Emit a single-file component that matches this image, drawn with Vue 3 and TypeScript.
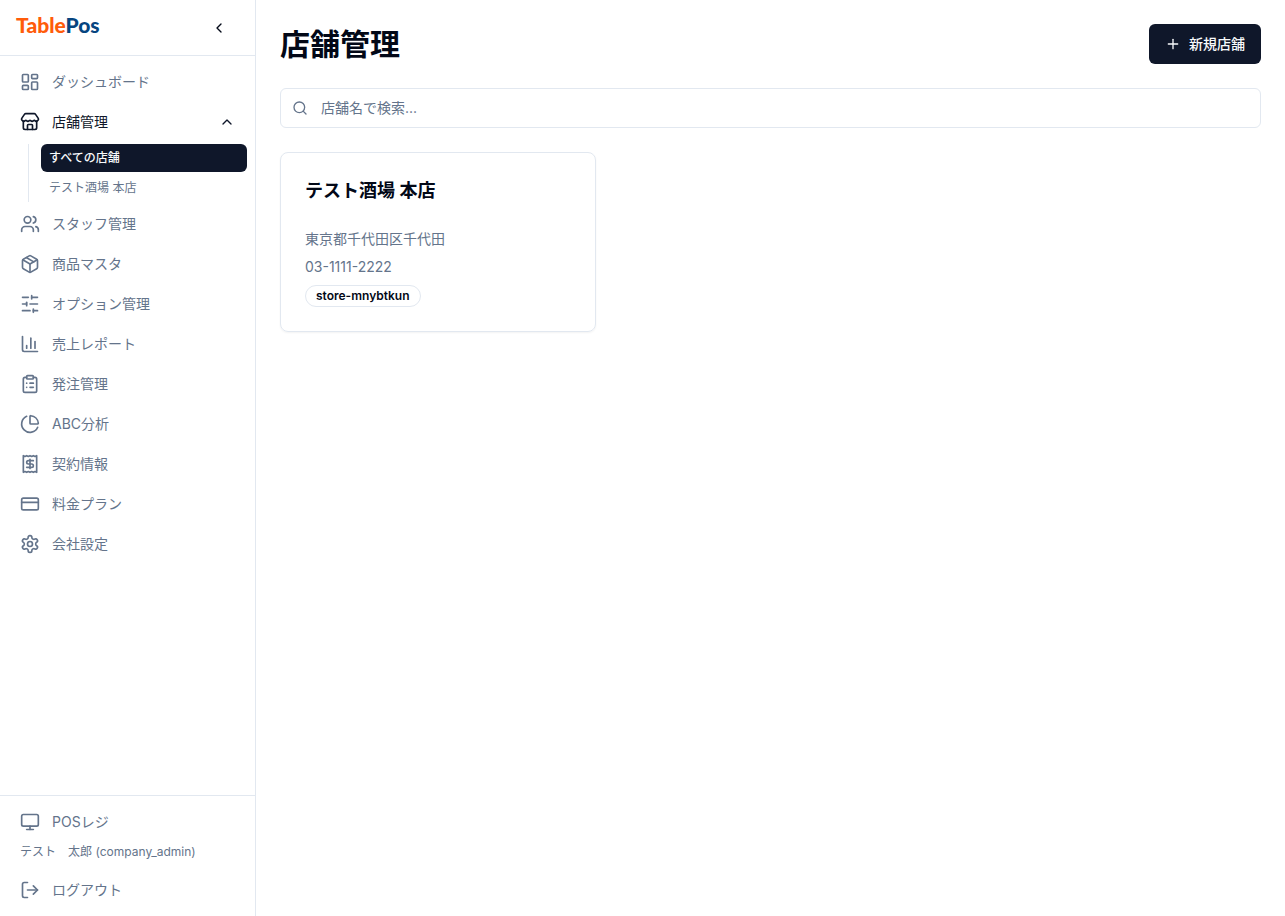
<script setup lang="ts">
import { ref } from 'vue'

interface NavItem {
  label: string
  icon: string[]
}

const icons: Record<string, string[]> = {
  dashboard: ['M4 3h5a1 1 0 0 1 1 1v7a1 1 0 0 1-1 1H4a1 1 0 0 1-1-1V4a1 1 0 0 1 1-1Z', 'M15 3h5a1 1 0 0 1 1 1v3a1 1 0 0 1-1 1h-5a1 1 0 0 1-1-1V4a1 1 0 0 1 1-1Z', 'M15 12h5a1 1 0 0 1 1 1v7a1 1 0 0 1-1 1h-5a1 1 0 0 1-1-1v-7a1 1 0 0 1 1-1Z', 'M4 16h5a1 1 0 0 1 1 1v3a1 1 0 0 1-1 1H4a1 1 0 0 1-1-1v-3a1 1 0 0 1 1-1Z'],
  store: ['M15 21v-5a1 1 0 0 0-1-1h-4a1 1 0 0 0-1 1v5', 'M17.774 10.31a1.12 1.12 0 0 0-1.549 0 2.5 2.5 0 0 1-3.451 0 1.12 1.12 0 0 0-1.548 0 2.5 2.5 0 0 1-3.452 0 1.12 1.12 0 0 0-1.549 0 2.5 2.5 0 0 1-3.77-3.248l2.889-4.184A2 2 0 0 1 7 2h10a2 2 0 0 1 1.653.873l2.895 4.192a2.5 2.5 0 0 1-3.774 3.244', 'M4 10.95V19a2 2 0 0 0 2 2h12a2 2 0 0 0 2-2v-8.05'],
  users: ['M16 21v-2a4 4 0 0 0-4-4H6a4 4 0 0 0-4 4v2', 'M13 7a4 4 0 1 1-8 0a4 4 0 0 1 8 0Z', 'M22 21v-2a4 4 0 0 0-3-3.87', 'M16 3.13a4 4 0 0 1 0 7.75'],
  box: ['m7.5 4.27 9 5.15', 'M21 8a2 2 0 0 0-1-1.73l-7-4a2 2 0 0 0-2 0l-7 4A2 2 0 0 0 3 8v8a2 2 0 0 0 1 1.73l7 4a2 2 0 0 0 2 0l7-4A2 2 0 0 0 21 16Z', 'm3.3 7 8.7 5 8.7-5', 'M12 22V12'],
  sliders: ['M21 4h-7', 'M10 4H3', 'M21 12h-9', 'M8 12H3', 'M21 20h-5', 'M12 20H3', 'M14 2v4', 'M8 10v4', 'M16 18v4'],
  chart: ['M3 3v16a2 2 0 0 0 2 2h16', 'M18 17V9', 'M13 17V5', 'M8 17v-3'],
  clipboard: ['M9 2h6a1 1 0 0 1 1 1v2a1 1 0 0 1-1 1H9a1 1 0 0 1-1-1V3a1 1 0 0 1 1-1Z', 'M16 4h2a2 2 0 0 1 2 2v14a2 2 0 0 1-2 2H6a2 2 0 0 1-2-2V6a2 2 0 0 1 2-2h2', 'M12 11h4', 'M12 16h4', 'M8 11h.01', 'M8 16h.01'],
  pie: ['M21 12c.552 0 1.005-.449.95-.998a10 10 0 0 0-8.953-8.951c-.55-.055-.998.398-.998.95v8a1 1 0 0 0 1 1z', 'M21.21 15.89A10 10 0 1 1 8 2.83'],
  receipt: ['M4 2v20l2-1 2 1 2-1 2 1 2-1 2 1 2-1 2 1V2l-2 1-2-1-2 1-2-1-2 1-2-1-2 1Z', 'M16 8h-6a2 2 0 1 0 0 4h4a2 2 0 1 1 0 4H8', 'M12 17.5v-11'],
  card: ['M4 5h16a2 2 0 0 1 2 2v10a2 2 0 0 1-2 2H4a2 2 0 0 1-2-2V7a2 2 0 0 1 2-2Z', 'M2 10h20'],
  settings: ['M12.22 2h-.44a2 2 0 0 0-2 2v.18a2 2 0 0 1-1 1.73l-.43.25a2 2 0 0 1-2 0l-.15-.08a2 2 0 0 0-2.73.73l-.22.38a2 2 0 0 0 .73 2.73l.15.1a2 2 0 0 1 1 1.72v.51a2 2 0 0 1-1 1.74l-.15.09a2 2 0 0 0-.73 2.73l.22.38a2 2 0 0 0 2.73.73l.15-.08a2 2 0 0 1 2 0l.43.25a2 2 0 0 1 1 1.73V20a2 2 0 0 0 2 2h.44a2 2 0 0 0 2-2v-.18a2 2 0 0 1 1-1.73l.43-.25a2 2 0 0 1 2 0l.15.08a2 2 0 0 0 2.73-.73l.22-.39a2 2 0 0 0-.73-2.73l-.15-.08a2 2 0 0 1-1-1.74v-.5a2 2 0 0 1 1-1.74l.15-.09a2 2 0 0 0 .73-2.73l-.22-.38a2 2 0 0 0-2.73-.73l-.15.08a2 2 0 0 1-2 0l-.43-.25a2 2 0 0 1-1-1.73V4a2 2 0 0 0-2-2z', 'M15 12a3 3 0 1 1-6 0a3 3 0 0 1 6 0Z'],
  monitor: ['M4 3h16a2 2 0 0 1 2 2v10a2 2 0 0 1-2 2H4a2 2 0 0 1-2-2V5a2 2 0 0 1 2-2Z', 'M8 21h8', 'M12 17v4'],
  logout: ['M9 21H5a2 2 0 0 1-2-2V5a2 2 0 0 1 2-2h4', 'm16 17 5-5-5-5', 'M21 12H9'],
}

const navItems: NavItem[] = [
  { label: 'スタッフ管理', icon: icons.users },
  { label: '商品マスタ', icon: icons.box },
  { label: 'オプション管理', icon: icons.sliders },
  { label: '売上レポート', icon: icons.chart },
  { label: '発注管理', icon: icons.clipboard },
  { label: 'ABC分析', icon: icons.pie },
  { label: '契約情報', icon: icons.receipt },
  { label: '料金プラン', icon: icons.card },
  { label: '会社設定', icon: icons.settings },
]

const stores = [
  { name: 'テスト酒場 本店', address: '東京都千代田区千代田', phone: '03-1111-2222', code: 'store-mnybtkun' },
]

const storesOpen = ref(true)
const query = ref('')
</script>

<template>
  <div class="layout">
    <aside class="sidebar">
      <div class="brand">
        <a href="#" class="logo"><span class="logo-table">Table</span><span class="logo-pos">Pos</span></a>
        <button type="button" class="collapse" aria-label="サイドバーを閉じる">
          <svg class="icon-sm" viewBox="0 0 24 24"><path d="m15 18-6-6 6-6" /></svg>
        </button>
      </div>

      <nav class="nav">
        <a href="#" class="nav-item">
          <svg class="icon" viewBox="0 0 24 24"><path v-for="d in icons.dashboard" :key="d" :d="d" /></svg>
          <span>ダッシュボード</span>
        </a>
        <button type="button" class="nav-item current" :aria-expanded="storesOpen" @click="storesOpen = !storesOpen">
          <svg class="icon" viewBox="0 0 24 24"><path v-for="d in icons.store" :key="d" :d="d" /></svg>
          <span class="grow">店舗管理</span>
          <svg class="icon-sm" viewBox="0 0 24 24"><path :d="storesOpen ? 'm18 15-6-6-6 6' : 'm6 9 6 6 6-6'" /></svg>
        </button>
        <div v-if="storesOpen" class="subnav">
          <a href="#" class="sub-item selected">すべての店舗</a>
          <a v-for="store in stores" :key="store.code" href="#" class="sub-item">{{ store.name }}</a>
        </div>
        <a v-for="item in navItems" :key="item.label" href="#" class="nav-item">
          <svg class="icon" viewBox="0 0 24 24"><path v-for="d in item.icon" :key="d" :d="d" /></svg>
          <span>{{ item.label }}</span>
        </a>
      </nav>

      <div class="account">
        <a href="#" class="nav-item">
          <svg class="icon" viewBox="0 0 24 24"><path v-for="d in icons.monitor" :key="d" :d="d" /></svg>
          <span>POSレジ</span>
        </a>
        <p class="user">テスト　太郎 (company_admin)</p>
        <button type="button" class="nav-item">
          <svg class="icon" viewBox="0 0 24 24"><path v-for="d in icons.logout" :key="d" :d="d" /></svg>
          <span>ログアウト</span>
        </button>
      </div>
    </aside>

    <main class="main">
      <header class="page-head">
        <h1>店舗管理</h1>
        <button type="button" class="primary">
          <svg class="icon-sm" viewBox="0 0 24 24"><path d="M5 12h14" /><path d="M12 5v14" /></svg>
          新規店舗
        </button>
      </header>

      <label class="search">
        <svg class="icon-sm" viewBox="0 0 24 24"><circle cx="11" cy="11" r="8" /><path d="m21 21-4.3-4.3" /></svg>
        <input v-model="query" type="search" placeholder="店舗名で検索..." aria-label="店舗名で検索" />
      </label>

      <section class="cards">
        <article v-for="store in stores" :key="store.code" class="card">
          <h2>{{ store.name }}</h2>
          <div class="details">
            <p>{{ store.address }}</p>
            <p>{{ store.phone }}</p>
            <span class="badge">{{ store.code }}</span>
          </div>
        </article>
      </section>
    </main>
  </div>
</template>

<style>
body {
  margin: 0;
  background: #fff;
}
</style>

<style scoped>
.layout {
  display: flex;
  min-height: 100vh;
  font-family: Inter, "Noto Sans CJK JP", sans-serif;
  font-size: 14px;
  line-height: 20px;
  color: #020817;
}

.layout *,
.layout {
  box-sizing: border-box;
}

button,
input {
  font: inherit;
  color: inherit;
}

button {
  border: 0;
  background: none;
  cursor: pointer;
}

a {
  color: inherit;
  text-decoration: none;
}

h1,
h2,
p {
  margin: 0;
}

svg {
  flex: none;
  fill: none;
  stroke: currentColor;
  stroke-width: 2;
  stroke-linecap: round;
  stroke-linejoin: round;
}

.icon {
  width: 20px;
  height: 20px;
}

.icon-sm {
  width: 16px;
  height: 16px;
}

.sidebar {
  display: flex;
  flex: none;
  flex-direction: column;
  width: 256px;
  border-right: 1px solid #e2e8f0;
}

.brand {
  display: flex;
  align-items: center;
  justify-content: space-between;
  height: 56px;
  padding: 0 16px;
  border-bottom: 1px solid #e2e8f0;
}

.logo {
  padding-bottom: 6px;
  font-family: Lato, sans-serif;
  font-size: 21px;
  font-weight: 900;
  line-height: 24px;
}

.logo-table {
  color: #ff5c0a;
}

.logo-pos {
  color: #064580;
}

.collapse {
  display: flex;
  align-items: center;
  justify-content: center;
  width: 40px;
  height: 36px;
  padding: 0;
}

.nav {
  display: flex;
  flex: 1;
  flex-direction: column;
  gap: 4px;
  padding: 8px;
}

.nav-item {
  display: flex;
  align-items: center;
  gap: 12px;
  width: 100%;
  height: 36px;
  padding: 0 12px;
  text-align: left;
  color: #64748b;
}

.nav-item.current {
  color: #0f172a;
}

.grow {
  flex: 1;
}

.subnav {
  display: flex;
  flex-direction: column;
  gap: 2px;
  margin-left: 20px;
  padding-left: 12px;
  border-left: 1px solid #e2e8f0;
}

.sub-item {
  padding: 6px 8px;
  border-radius: 6px;
  font-size: 12px;
  line-height: 16px;
  color: #64748b;
}

.sub-item.selected {
  background: #0f172a;
  font-weight: 500;
  color: #f8fafc;
}

.account {
  padding: 8px;
  border-top: 1px solid #e2e8f0;
}

.user {
  padding: 4px 12px 12px;
  font-size: 12px;
  line-height: 16px;
  color: #64748b;
}

.main {
  display: flex;
  flex: 1;
  flex-direction: column;
  gap: 24px;
  min-width: 0;
  padding: 24px;
}

.page-head {
  display: flex;
  align-items: center;
  justify-content: space-between;
}

h1 {
  font-size: 30px;
  font-weight: 700;
  line-height: 36px;
}

.primary {
  display: flex;
  align-items: center;
  gap: 8px;
  height: 40px;
  padding: 0 16px;
  border-radius: 6px;
  background: #0f172a;
  font-weight: 500;
  color: #f8fafc;
}

.search {
  display: flex;
  align-items: center;
  gap: 13px;
  height: 40px;
  padding: 0 11px;
  border: 1px solid #e2e8f0;
  border-radius: 6px;
  color: #64748b;
}

.search input {
  flex: 1;
  min-width: 0;
  padding: 0;
  border: 0;
  outline: 0;
  background: none;
  color: #020817;
}

.search input::placeholder {
  color: #64748b;
}

.cards {
  display: grid;
  grid-template-columns: repeat(3, minmax(0, 1fr));
  gap: 16px;
}

.card {
  display: flex;
  flex-direction: column;
  gap: 24px;
  padding: 24px;
  border: 1px solid #e2e8f0;
  border-radius: 8px;
  box-shadow: 0 1px 2px rgba(0, 0, 0, 0.05);
}

h2 {
  font-size: 18px;
  font-weight: 600;
  line-height: 28px;
}

.details {
  display: flex;
  flex-direction: column;
  align-items: flex-start;
  gap: 8px;
  color: #64748b;
}

.badge {
  padding: 2px 10px;
  border: 1px solid #e2e8f0;
  border-radius: 11px;
  font-size: 12px;
  font-weight: 600;
  line-height: 16px;
  color: #020817;
}
</style>
